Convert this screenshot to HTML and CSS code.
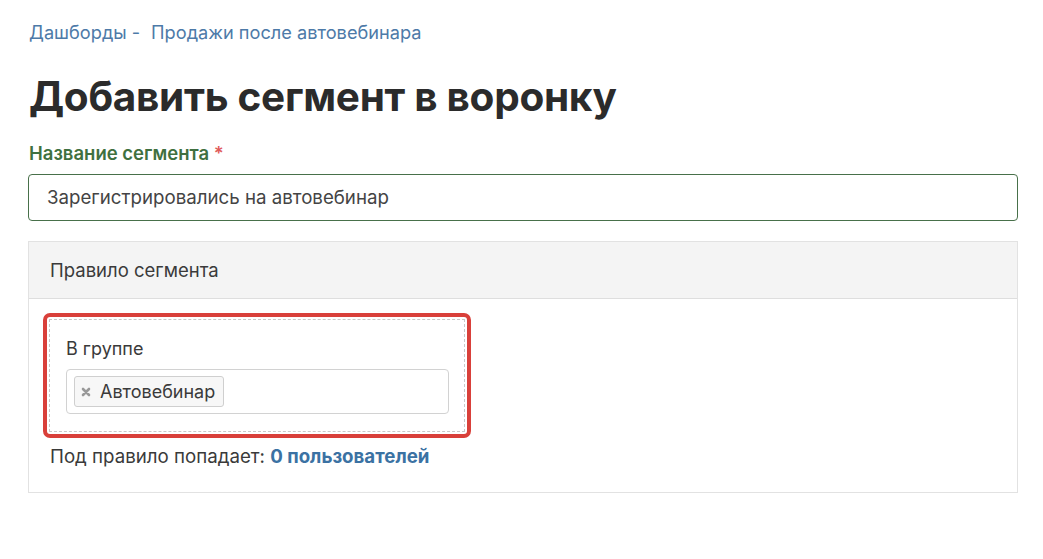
FILE: index.html
```html
<!DOCTYPE html>
<html lang="ru">
<head>
<meta charset="utf-8">
<title>Добавить сегмент в воронку</title>
<link rel="stylesheet" href="styles.css">
</head>
<body>
<div class="page">
  <nav class="breadcrumbs">
    <a class="crumb" href="#">Дашборды</a><span class="sep">-</span><a class="crumb" href="#">Продажи после автовебинара</a>
  </nav>
  <h1 class="title">Добавить сегмент в воронку</h1>
  <div class="field">
    <label class="field-label">Название сегмента <span class="req">*</span></label>
    <div class="text-input">Зарегистрировались на автовебинар</div>
  </div>
  <section class="panel">
    <header class="panel-head">Правило сегмента</header>
    <div class="panel-body">
      <div class="highlight">
        <div class="rule">
          <div class="rule-label">В группе</div>
          <div class="select">
            <span class="tag"><svg class="tag-x" viewBox="0 0 10 10" width="10" height="10" aria-hidden="true"><path d="M2 2 L8 8 M8 2 L2 8" stroke="#999999" stroke-width="2.6" stroke-linecap="round"/></svg>Автовебинар</span>
          </div>
        </div>
      </div>
      <div class="count">Под правило попадает: <a class="count-link" href="#">0 пользователей</a></div>
    </div>
  </section>
</div>
</body>
</html>
```

FILE: styles.css
```css
html, body {
  margin: 0;
  padding: 0;
  background: #ffffff;
}
body {
  font-family: Inter, "Noto Sans", "DejaVu Sans", sans-serif;
  color: #333333;
}
.page {
  padding: 20px 25px 0 28px;
}
.breadcrumbs {
  font-size: 18.2px;
  line-height: 24px;
  color: #4d7aa8;
  padding-left: 1px;
}
.crumb {
  color: #4d7aa8;
  text-decoration: none;
}
.sep {
  margin: 0 11px 0 5px;
}
.title {
  margin: 29px 0 0 1px;
  font-size: 40.5px;
  line-height: 48px;
  font-weight: 700;
  color: #2b2b2b;
  letter-spacing: -0.3px;
}
.field {
  margin-top: 20px;
}
.field-label {
  display: block;
  font-size: 18.5px;
  line-height: 24px;
  font-weight: 600;
  color: #3f7040;
  padding-left: 1px;
}
.req {
  color: #e05a5a;
}
.text-input {
  margin-top: 9px;
  height: 45px;
  border: 1px solid #48704a;
  border-radius: 4px;
  box-sizing: content-box;
  padding: 0 18px;
  display: flex;
  align-items: center;
  font-size: 18.7px;
  color: #444444;
}
.panel {
  margin-top: 20px;
  border: 1px solid #e2e2e2;
}
.panel-head {
  height: 56px;
  background: #f4f4f4;
  border-bottom: 1px solid #dedede;
  display: flex;
  align-items: center;
  padding-left: 21px;
  font-size: 18.5px;
  color: #3a3a3a;
}
.panel-body {
  padding: 14px 20px 23px 14px;
}
.highlight {
  width: 416px;
  border: 4px solid #d9403a;
  border-radius: 7px;
  padding: 2px;
  box-sizing: content-box;
}
.rule {
  border: 1px dashed #c8c8c8;
  padding: 18px 15px 17px 16px;
}
.rule-label {
  font-size: 18px;
  line-height: 22px;
  color: #3a3a3a;
}
.select {
  margin-top: 9px;
  height: 43px;
  border: 1px solid #d2d2d2;
  border-radius: 4px;
  display: flex;
  align-items: center;
  padding: 0 7px;
}
.tag {
  display: inline-flex;
  align-items: center;
  height: 29px;
  border: 1px solid #cfcfcf;
  border-radius: 3px;
  background: #f7f7f7;
  padding: 0 8px 0 6px;
  font-size: 18px;
  color: #3a3a3a;
}
.tag-x {
  display: block;
  margin-right: 9px;
}
.count {
  margin-top: 7px;
  padding-left: 7px;
  font-size: 18.7px;
  line-height: 24px;
  color: #3a3a3a;
}
.count-link {
  color: #3b72a3;
  font-weight: 700;
  text-decoration: none;
}
```
